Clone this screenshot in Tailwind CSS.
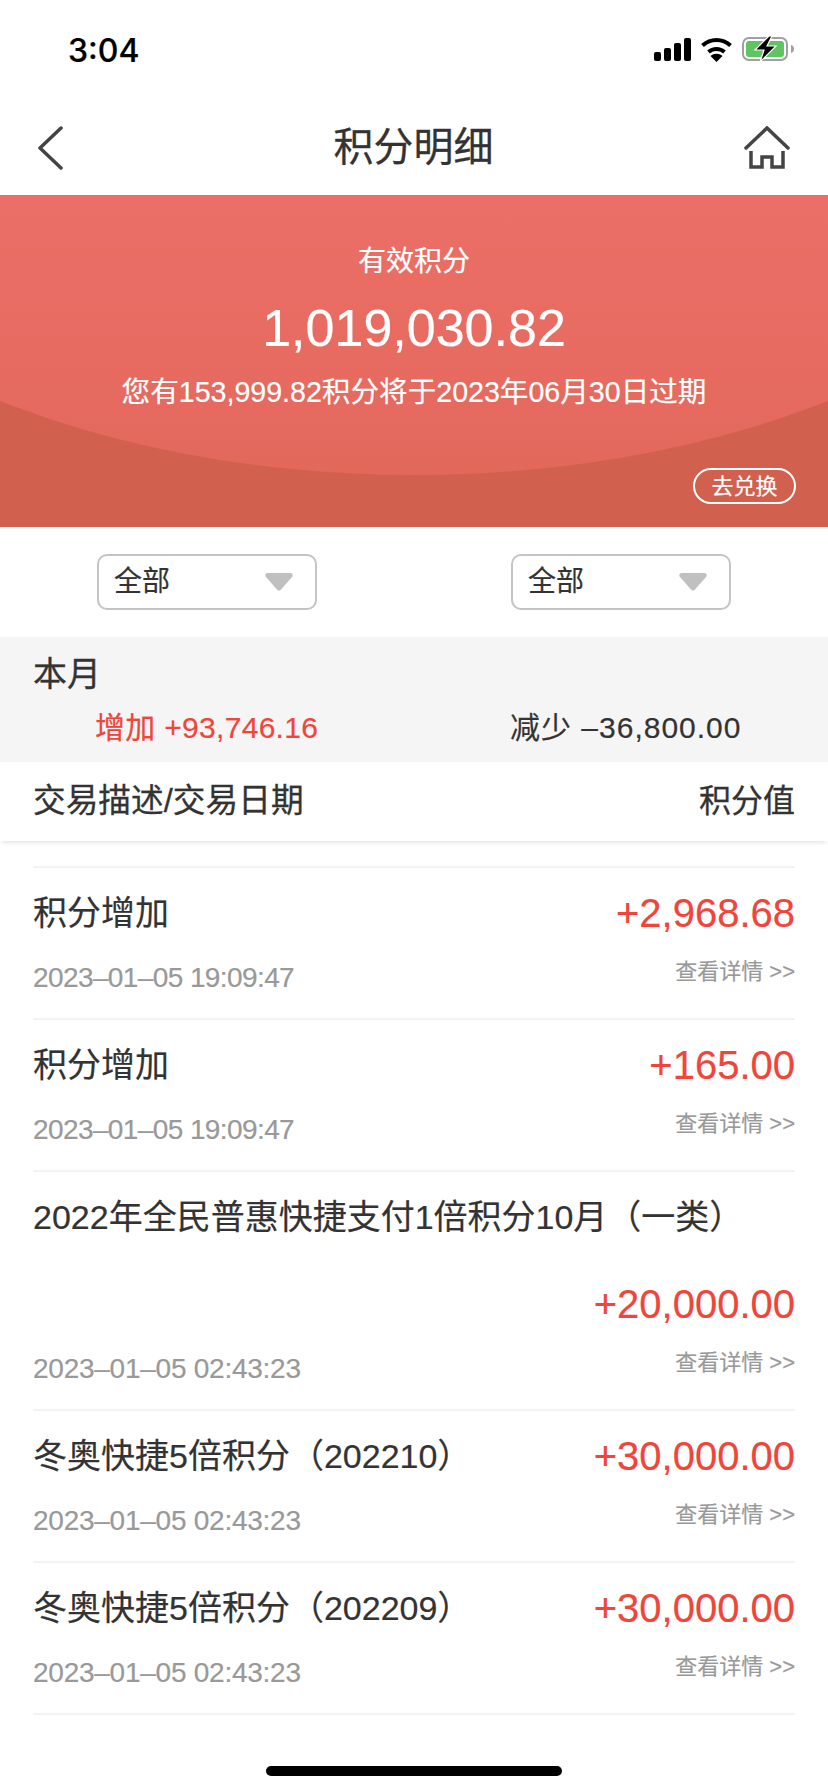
<!DOCTYPE html>
<html lang="zh-CN">
<head>
<meta charset="UTF-8">
<title>积分明细</title>
<script src="https://cdn.jsdelivr.net/npm/@tailwindcss/browser@4"></script>
</head>
<body class="bg-white font-['Liberation_Sans','Noto_Sans_CJK_SC',sans-serif] text-[#333]">
<div class="relative w-[828px] h-[1792px] overflow-hidden [-webkit-text-stroke:0.2px]">

  <!-- status bar -->
  <div class="h-[100px] flex items-center justify-between pl-[68px] pr-[34px] pb-[2px]">
    <span class="mt-[4px] text-[32px] font-medium text-black font-['Inter',sans-serif]">3:04</span>
    <div class="flex items-center gap-[10px]">
      <svg width="37" height="23" viewBox="0 0 37 23" fill="#000"><rect x="0" y="14" width="7" height="9" rx="2"/><rect x="10" y="10" width="7" height="13" rx="2"/><rect x="20" y="5" width="7" height="18" rx="2"/><rect x="30" y="0" width="7" height="23" rx="2"/></svg>
      <svg width="31" height="25" viewBox="0 0 31 25" fill="none" stroke="#000" stroke-width="4"><path d="M1.500 8.500C9.500 1 21.500 1 29.500 8.500"/><path d="M7.500 15C12 11 19 11 23.500 15"/><path d="M15.500 25l-6-6c3.500-3 8.500-3 12 0z" fill="#000" stroke="none"/></svg>
      <svg width="52" height="28" viewBox="0 0 52 28"><rect x="1" y="3" width="44" height="22" rx="6" fill="none" stroke="#a0a0a0" stroke-width="2"/><rect x="4" y="6" width="38" height="16" rx="3" fill="#5fc560"/><path d="M49 10c2 .5 3 2 3 4s-1 3.500-3 4z" fill="#a0a0a0"/><path d="M27 1L13 15h9l-4 12 16-16h-9l5-10z" fill="#000" stroke="#fff" stroke-width="1.200"/></svg>
    </div>
  </div>

  <!-- nav -->
  <div class="h-[95px] flex items-center justify-between pl-[37px] pr-[38px]">
    <div class="w-[46px]">
      <svg width="26" height="44" viewBox="0 0 26 44" fill="none" stroke="#444" stroke-width="3.500" stroke-linecap="round" stroke-linejoin="round"><path d="M24 2L3 22l21 20"/></svg>
    </div>
    <span class="text-[40px] text-[#333] pb-[2px] [-webkit-text-stroke:0.3px_#333]">积分明细</span>
    <svg width="46" height="44" viewBox="0 0 46 44" fill="none" stroke="#444" stroke-width="3.500" stroke-linecap="round"><path d="M2 22L23 2l21 20"/><path d="M7 25v16h11V31h10v10h11V25" stroke-linecap="butt"/></svg>
  </div>

  <!-- hero -->
  <div class="relative h-[332px] bg-[#d2604f] overflow-hidden text-white">
    <div class="absolute left-[-300px] top-[-520px] w-[1428px] h-[800px] rounded-[50%] bg-linear-to-b from-[#ec6f67] from-[65%] to-[#e3685c]"></div>
    <div class="relative flex flex-col items-center pt-[48px]">
      <div class="text-[28px] leading-[38px]">有效积分</div>
      <div class="text-[52px] leading-[64px] mt-[15px]">1,019,030.82</div>
      <div class="text-[28.6px] leading-[38px] mt-[13px]">您有153,999.82积分将于2023年06月30日过期</div>
    </div>
    <div class="absolute right-[32px] top-[273px] w-[103px] h-[36px] rounded-full border-2 border-white flex items-center justify-center text-[22px]">去兑换</div>
  </div>

  <!-- filters -->
  <div class="h-[110px] flex items-center justify-between pl-[97px] pr-[97px] pb-[1px]">
    <div class="w-[220px] h-[56px] rounded-[10px] border-2 border-[#c4c4c4] flex items-center justify-between pl-[15px] pr-[22px] text-[28px]">
      全部
      <svg width="28" height="18" viewBox="0 0 28 18" fill="#c0c0c0"><path d="M3 0h22c2.500 0 3.500 2 2 4L16 16.500c-1 1.500-3 1.500-4 0L1 4C-.5 2 .5 0 3 0z"/></svg>
    </div>
    <div class="w-[220px] h-[56px] rounded-[10px] border-2 border-[#c4c4c4] flex items-center justify-between pl-[15px] pr-[22px] text-[28px]">
      全部
      <svg width="28" height="18" viewBox="0 0 28 18" fill="#c0c0c0"><path d="M3 0h22c2.500 0 3.500 2 2 4L16 16.500c-1 1.500-3 1.500-4 0L1 4C-.5 2 .5 0 3 0z"/></svg>
    </div>
  </div>

  <!-- this month -->
  <div class="h-[125px] bg-[#f5f5f5] px-[33px] pt-[14px]">
    <div class="text-[34px] leading-[46px] [-webkit-text-stroke:0.3px_#333]">本月</div>
    <div class="flex text-[30px] leading-[42px] mt-[10px]">
      <div class="w-[477px] pl-[62px] text-[#f0453a] tracking-[0.3px]">增加 +93,746.16</div>
      <div class="tracking-[1px]">减少 –36,800.00</div>
    </div>
  </div>

  <!-- table head -->
  <div class="relative h-[79px] flex items-center justify-between px-[33px] pb-[2px] shadow-[0_4px_4px_-2px_rgba(0,0,0,0.1)] [-webkit-text-stroke:0.3px_#333]">
    <span class="text-[32.7px]">交易描述/交易日期</span>
    <span class="text-[32px]">积分值</span>
  </div>

  <!-- rows -->
  <div class="mx-[33px] mt-[25px] border-t-2 border-[#f3f3f3]">
    <div class="h-[152px] border-b-2 border-[#f3f3f3] pt-[22px]">
      <div class="flex justify-between items-center h-[46px]"><span class="text-[34px]">积分增加</span><span class="text-[40px] text-[#f0453a]">+2,968.68</span></div>
      <div class="flex justify-between mt-[16px]"><span class="text-[28px] tracking-[-0.6px] leading-[44px] text-[#999] mt-[4px]">2023–01–05 19:09:47</span><span class="text-[22px] leading-[36px] text-[#999] mt-[2px]">查看详情 &gt;&gt;</span></div>
    </div>
    <div class="h-[152px] border-b-2 border-[#f3f3f3] pt-[22px]">
      <div class="flex justify-between items-center h-[46px]"><span class="text-[34px]">积分增加</span><span class="text-[40px] text-[#f0453a]">+165.00</span></div>
      <div class="flex justify-between mt-[16px]"><span class="text-[28px] tracking-[-0.6px] leading-[44px] text-[#999] mt-[4px]">2023–01–05 19:09:47</span><span class="text-[22px] leading-[36px] text-[#999] mt-[2px]">查看详情 &gt;&gt;</span></div>
    </div>
    <div class="h-[239px] border-b-2 border-[#f3f3f3] pt-[22px]">
      <div class="text-[34px] leading-[46px]">2022年全民普惠快捷支付1倍积分10月（一类）</div>
      <div class="flex justify-end items-center h-[46px] mt-[41px] text-[40px] text-[#f0453a]">+20,000.00</div>
      <div class="flex justify-between mt-[16px]"><span class="text-[28px] tracking-[-0.25px] leading-[44px] text-[#999] mt-[4px]">2023–01–05 02:43:23</span><span class="text-[22px] leading-[36px] text-[#999] mt-[2px]">查看详情 &gt;&gt;</span></div>
    </div>
    <div class="h-[152px] border-b-2 border-[#f3f3f3] pt-[22px]">
      <div class="flex justify-between items-center h-[46px]"><span class="text-[34px]">冬奥快捷5倍积分（202210）</span><span class="text-[40px] text-[#f0453a]">+30,000.00</span></div>
      <div class="flex justify-between mt-[16px]"><span class="text-[28px] tracking-[-0.25px] leading-[44px] text-[#999] mt-[4px]">2023–01–05 02:43:23</span><span class="text-[22px] leading-[36px] text-[#999] mt-[2px]">查看详情 &gt;&gt;</span></div>
    </div>
    <div class="h-[152px] border-b-2 border-[#f3f3f3] pt-[22px]">
      <div class="flex justify-between items-center h-[46px]"><span class="text-[34px]">冬奥快捷5倍积分（202209）</span><span class="text-[40px] text-[#f0453a]">+30,000.00</span></div>
      <div class="flex justify-between mt-[16px]"><span class="text-[28px] tracking-[-0.25px] leading-[44px] text-[#999] mt-[4px]">2023–01–05 02:43:23</span><span class="text-[22px] leading-[36px] text-[#999] mt-[2px]">查看详情 &gt;&gt;</span></div>
    </div>
  </div>

  <!-- home indicator -->
  <div class="absolute left-[266px] bottom-[16px] w-[296px] h-[10px] rounded-full bg-black"></div>
</div>
</body>
</html>
